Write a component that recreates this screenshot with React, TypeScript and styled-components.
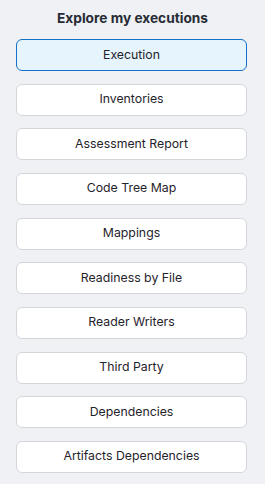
import React, { useState } from "react";
import styled, { createGlobalStyle } from "styled-components";

const items: string[] = [
  "Execution",
  "Inventories",
  "Assessment Report",
  "Code Tree Map",
  "Mappings",
  "Readiness by File",
  "Reader Writers",
  "Third Party",
  "Dependencies",
  "Artifacts Dependencies",
];

const App: React.FC = () => {
  const [active, setactive] = useState<string>("Execution");

  return (
    <>
      <GlobalStyle />
      <Panel>
        <Title>Explore my executions</Title>
        <List>
          {items.map((item) => (
            <Item
              key={item}
              $active={item === active}
              onClick={() => setactive(item)}
            >
              {item}
            </Item>
          ))}
        </List>
      </Panel>
    </>
  );
};

export default App;

const GlobalStyle = createGlobalStyle`
  html, body {
    margin: 0;
    padding: 0;
    background: #f0f1f5;
    font-family: Inter, "Liberation Sans", sans-serif;
  }
`;

const Panel = styled.div`
  width: 265px;
  min-height: 484px;
  box-sizing: border-box;
  padding: 9px 16px 0 16px;
  display: flex;
  flex-direction: column;
  align-items: stretch;
`;

const Title = styled.h2`
  margin: 0;
  font-size: 13.7px;
  line-height: 18px;
  font-weight: 700;
  color: #272c35;
  text-align: center;
`;

const List = styled.div`
  margin-top: 12px;
  display: flex;
  flex-direction: column;
  gap: 12.67px;
`;

const Item = styled.button<{ $active: boolean }>`
  width: 231px;
  height: 32px;
  box-sizing: border-box;
  border-radius: 6px;
  border: 1px solid ${(p) => (p.$active ? "#1570c9" : "#d3d6db")};
  background: ${(p) => (p.$active ? "#e6f4fd" : "#ffffff")};
  color: #1f232b;
  font-family: Inter, "Liberation Sans", sans-serif;
  font-size: 12.3px;
  line-height: 16px;
  cursor: pointer;
  padding: 0 0 1px 0;
`;
